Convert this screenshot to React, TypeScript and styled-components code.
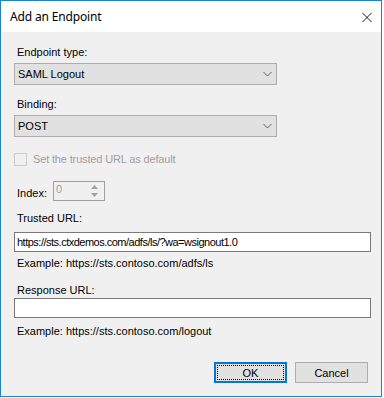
import React from "react";
import styled, { createGlobalStyle } from "styled-components";

const Global = createGlobalStyle`
  html, body { margin: 0; padding: 0; background: #ffffff; }
  * { box-sizing: border-box; }
`;

const Window = styled.div`
  width: 382px;
  height: 397px;
  border: 1px solid #1883d7;
  display: flex;
  flex-direction: column;
  background: #f0f0f0;
  font-family: "Liberation Sans", Arial, sans-serif;
  font-size: 11px;
  color: #000;
`;

const TitleBar = styled.div`
  height: 31px;
  background: #ffffff;
  display: flex;
  align-items: center;
  justify-content: space-between;
  padding: 0 9px 1px 9px;
  flex-shrink: 0;
`;

const Title = styled.div`
  font-family: "Segoe UI", "Noto Sans", sans-serif;
  font-size: 12px;
  color: #000;
  letter-spacing: -0.15px;
`;

const CloseBtn = styled.div`
  width: 10px;
  height: 10px;
  margin-top: 1px;
  display: flex;
`;

const Body = styled.div`
  flex: 1;
  display: flex;
  flex-direction: column;
  padding: 14px 11px 0 13px;
`;

const Label = styled.div<{ $mt?: number }>`
  margin-top: ${(p) => p.$mt ?? 0}px;
  margin-left: 3px;
  line-height: 13px;
  height: 13px;
  color: #000;
  white-space: nowrap;
`;

const Combo = styled.div<{ $mt?: number }>`
  margin-top: ${(p) => p.$mt ?? 0}px;
  width: 263px;
  height: 22px;
  background: #e1e1e1;
  border: 1px solid #adadad;
  display: flex;
  align-items: center;
  justify-content: space-between;
  padding: 0 4px 0 3px;
`;

const ComboText = styled.span`
  line-height: 13px;
  margin-top: 1px;
`;

const CheckRow = styled.div<{ $mt?: number }>`
  margin-top: ${(p) => p.$mt ?? 0}px;
  display: flex;
  align-items: center;
  height: 13px;
  gap: 6px;
`;

const CheckBox = styled.div`
  width: 13px;
  height: 13px;
  border: 1px solid #cccccc;
  background: #f0f0f0;
`;

const CheckText = styled.span`
  color: #a0a0a0;
  line-height: 13px;
  letter-spacing: -0.15px;
`;

const IndexRow = styled.div<{ $mt?: number }>`
  margin-top: ${(p) => p.$mt ?? 0}px;
  display: flex;
  align-items: center;
  height: 20px;
`;

const IndexLabel = styled.span`
  margin-left: 3px;
  width: 36px;
  line-height: 13px;
  margin-top: 4px;
`;

const Spin = styled.div`
  width: 52px;
  height: 20px;
  border: 1px solid #a0a0a0;
  background: #f0f0f0;
  display: flex;
  justify-content: space-between;
  padding: 1px 1px 1px 2px;
`;

const SpinValue = styled.span`
  color: #a0a0a0;
  line-height: 13px;
`;

const SpinButtons = styled.div`
  width: 13px;
  display: flex;
  flex-direction: column;
  margin-right: 2px;
`;

const SpinBtn = styled.div`
  flex: 1;
  display: flex;
  align-items: center;
  justify-content: center;
`;

const TextBox = styled.div<{ $mt?: number }>`
  margin-top: ${(p) => p.$mt ?? 0}px;
  width: 357px;
  height: 20px;
  background: #ffffff;
  border: 1px solid #7a7a7a;
  display: flex;
  align-items: center;
  padding: 0 2px;
`;

const TextValue = styled.span`
  line-height: 13px;
  white-space: nowrap;
  letter-spacing: -0.5px;
`;

const ButtonRow = styled.div<{ $mt?: number }>`
  margin-top: ${(p) => p.$mt ?? 0}px;
  display: flex;
  justify-content: flex-end;
  gap: 8px;
  padding-right: 2px;
`;

const Button = styled.div<{ $default?: boolean }>`
  position: relative;
  width: 73px;
  height: 21px;
  background: #e1e1e1;
  border: ${(p) => (p.$default ? "2px solid #0078d7" : "1px solid #adadad")};
  display: flex;
  align-items: center;
  justify-content: center;
  line-height: 13px;
  padding-top: 1px;
`;

const FocusRect = styled.div`
  position: absolute;
  inset: 1px;
  border: 1px dotted #000;
`;

const Chevron = () => (
  <svg width="9" height="6" viewBox="0 0 9 6">
    <polyline points="0.5,1 4.5,5 8.5,1" fill="none" stroke="#606060" strokeWidth="1" />
  </svg>
);

const CloseIcon = () => (
  <svg width="11" height="11" viewBox="0 0 11 11">
    <path d="M0.5 0.5 L10.5 10.5 M10.5 0.5 L0.5 10.5" stroke="#000" strokeWidth="1" fill="none" />
  </svg>
);

export default function App() {
  return (
    <>
      <Global />
      <Window>
        <TitleBar>
          <Title>Add an Endpoint</Title>
          <CloseBtn>
            <CloseIcon />
          </CloseBtn>
        </TitleBar>
        <Body>
          <Label>Endpoint type:</Label>
          <Combo $mt={4}>
            <ComboText>SAML Logout</ComboText>
            <Chevron />
          </Combo>
          <Label $mt={13}>Binding:</Label>
          <Combo $mt={4}>
            <ComboText>POST</ComboText>
            <Chevron />
          </Combo>
          <CheckRow $mt={16}>
            <CheckBox />
            <CheckText>Set the trusted URL as default</CheckText>
          </CheckRow>
          <IndexRow $mt={15}>
            <IndexLabel>Index:</IndexLabel>
            <Spin>
              <SpinValue>0</SpinValue>
              <SpinButtons>
                <SpinBtn>
                  <svg width="7" height="4" viewBox="0 0 7 4">
                    <polygon points="3.5,0 7,4 0,4" fill="#a0a0a0" />
                  </svg>
                </SpinBtn>
                <SpinBtn>
                  <svg width="7" height="4" viewBox="0 0 7 4">
                    <polygon points="0,0 7,0 3.5,4" fill="#a0a0a0" />
                  </svg>
                </SpinBtn>
              </SpinButtons>
            </Spin>
          </IndexRow>
          <Label $mt={11}>Trusted URL:</Label>
          <TextBox $mt={7}>
            <TextValue>https://sts.ctxdemos.com/adfs/ls/?wa=wsignout1.0</TextValue>
          </TextBox>
          <Label $mt={5}>Example: https://sts.contoso.com/adfs/ls</Label>
          <Label $mt={14}>Response URL:</Label>
          <TextBox $mt={1} />
          <Label $mt={7}>Example: https://sts.contoso.com/logout</Label>
          <ButtonRow $mt={24}>
            <Button $default>
              <FocusRect />
              OK
            </Button>
            <Button>Cancel</Button>
          </ButtonRow>
        </Body>
      </Window>
    </>
  );
}
